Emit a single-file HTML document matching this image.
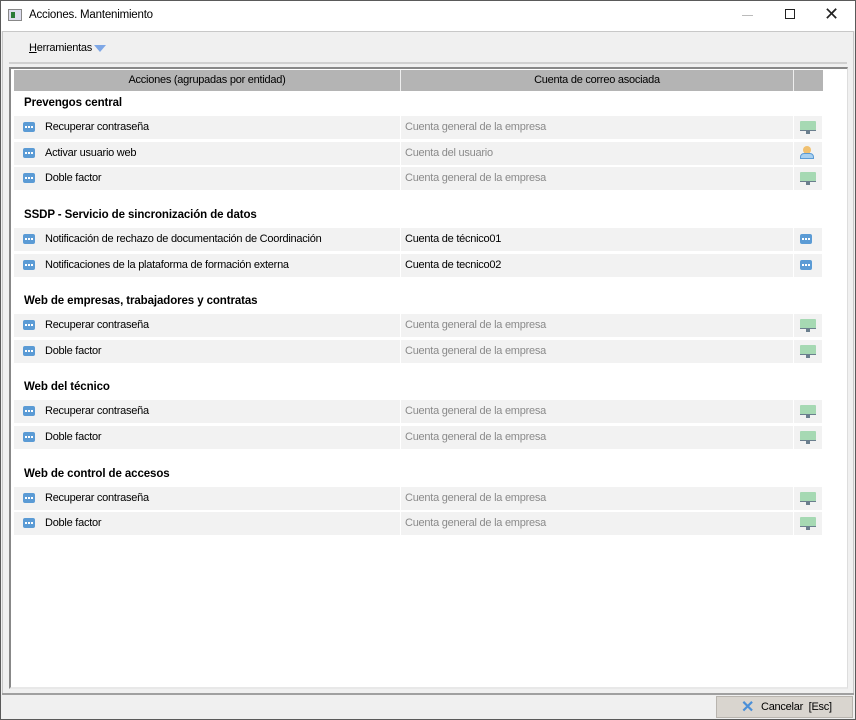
<!DOCTYPE html><html><head><style>
*{margin:0;padding:0;box-sizing:border-box}
body{width:856px;height:720px;position:relative;overflow:hidden;font-family:"Liberation Sans",sans-serif;font-size:12px;color:#000;background:#f0f0f0}
.a{position:absolute}
.t{font-size:11px;letter-spacing:-0.25px;white-space:nowrap}
.row{position:absolute;left:14px;height:23px}
.c1{position:absolute;left:0;width:386px;height:23px;background:#f2f2f2}
.c2{position:absolute;left:387px;width:392px;height:23px;background:#f2f2f2}
.c3{position:absolute;left:780px;width:28px;height:23px;background:#f2f2f2}
.ic{position:absolute;width:12px;height:10px;background:#5b9bd5;border-radius:2px;top:6px}
.ic i{position:absolute;top:4px;width:2px;height:2px;background:#fff}
.l1{position:absolute;left:31px;top:5px}
.l2{position:absolute;left:391px;top:5px;color:#8a8a8a}
.l2.b{color:#000}
.mon{position:absolute;left:786px;top:5px;width:16px;height:10px;background:#a6d9b3;border-radius:1px}
.mon:after{content:"";position:absolute;left:6px;top:10px;width:4px;height:3px;background:#6b7f8e}
.mon:before{content:"";position:absolute;left:0;top:9px;width:16px;height:1px;background:#6b7f8e}
.h{position:absolute;left:24px;font-weight:bold;font-size:11.5px;letter-spacing:-0.1px}
</style></head><body>
<div class="a" style="left:0;top:0;width:856px;height:720px;border:1px solid #5a5a5a"></div>
<div class="a" style="left:1px;top:1px;width:854px;height:30px;background:#fff"></div>
<div class="a" style="left:8px;top:9px;width:14px;height:12px;border:1px solid #888;background:#dde"><div style="position:absolute;left:2px;top:2px;width:4px;height:6px;background:#2a7a3a"></div></div>
<div class="a" style="left:29px;top:9px;font-size:11.5px;letter-spacing:-0.2px">Acciones. Mantenimiento</div>
<div class="a" style="left:742px;top:15px;width:11px;height:1px;background:#bbb"></div>
<div class="a" style="left:785px;top:9px;width:10px;height:10px;border:1px solid #222"></div>
<div class="a" style="left:824px;top:4px;font-size:18px;color:#222">✕</div>
<div class="a" style="left:2px;top:31px;width:852px;height:663px;border:1px solid #c8c8c8"></div>
<div class="a t" style="left:29px;top:42px"><u>H</u>erramientas</div>
<div class="a" style="left:94px;top:45px;width:0;height:0;border-left:6px solid transparent;border-right:6px solid transparent;border-top:7px solid #7ea7e6"></div>
<div class="a" style="left:9px;top:62px;width:838px;height:2px;background:#d0d0d0"></div>
<div class="a" style="left:9px;top:67px;width:839px;height:622px;background:#fff;border-left:2px solid #888;border-top:2px solid #888;border-right:1px solid #ddd;border-bottom:2px solid #e8e8e8"></div>
<div class="a" style="left:14px;top:70px;width:809px;height:21px;background:#b4b4b4"></div>
<div class="a" style="left:400px;top:70px;width:1px;height:21px;background:#eee"></div>
<div class="a" style="left:793px;top:70px;width:1px;height:21px;background:#eee"></div>
<div class="a t" style="left:14px;top:74px;width:386px;text-align:center">Acciones (agrupadas por entidad)</div>
<div class="a t" style="left:401px;top:74px;width:392px;text-align:center">Cuenta de correo asociada</div>

<div class="h" style="top:97px">Prevengos central</div>
<div class="row" style="top:116px"><div class="c1"></div><div class="c2"></div><div class="c3"></div><div class="ic" style="left:9px"><i style="left:2px"></i><i style="left:5px"></i><i style="left:8px"></i></div><div class="l1 t">Recuperar contraseña</div><div class="l2 t">Cuenta general de la empresa</div><div class="mon"></div></div>
<div class="row" style="top:142px"><div class="c1"></div><div class="c2"></div><div class="c3"></div><div class="ic" style="left:9px"><i style="left:2px"></i><i style="left:5px"></i><i style="left:8px"></i></div><div class="l1 t">Activar usuario web</div><div class="l2 t">Cuenta del usuario</div><div class="a" style="left:789px;top:4px;width:8px;height:8px;border-radius:50%;background:#f0c070"></div><div class="a" style="left:786px;top:11px;width:14px;height:6px;border-radius:4px 4px 0 0;background:#a8d0f0;border:1px solid #5b9bd5"></div></div>
<div class="row" style="top:167px"><div class="c1"></div><div class="c2"></div><div class="c3"></div><div class="ic" style="left:9px"><i style="left:2px"></i><i style="left:5px"></i><i style="left:8px"></i></div><div class="l1 t">Doble factor</div><div class="l2 t">Cuenta general de la empresa</div><div class="mon"></div></div>

<div class="h" style="top:209px">SSDP - Servicio de sincronización de datos</div>
<div class="row" style="top:228px"><div class="c1"></div><div class="c2"></div><div class="c3"></div><div class="ic" style="left:9px"><i style="left:2px"></i><i style="left:5px"></i><i style="left:8px"></i></div><div class="l1 t">Notificación de rechazo de documentación de Coordinación</div><div class="l2 b t">Cuenta de técnico01</div><div class="ic" style="left:786px"><i style="left:2px"></i><i style="left:5px"></i><i style="left:8px"></i></div></div>
<div class="row" style="top:254px"><div class="c1"></div><div class="c2"></div><div class="c3"></div><div class="ic" style="left:9px"><i style="left:2px"></i><i style="left:5px"></i><i style="left:8px"></i></div><div class="l1 t">Notificaciones de la plataforma de formación externa</div><div class="l2 b t">Cuenta de tecnico02</div><div class="ic" style="left:786px"><i style="left:2px"></i><i style="left:5px"></i><i style="left:8px"></i></div></div>

<div class="h" style="top:295px">Web de empresas, trabajadores y contratas</div>
<div class="row" style="top:314px"><div class="c1"></div><div class="c2"></div><div class="c3"></div><div class="ic" style="left:9px"><i style="left:2px"></i><i style="left:5px"></i><i style="left:8px"></i></div><div class="l1 t">Recuperar contraseña</div><div class="l2 t">Cuenta general de la empresa</div><div class="mon"></div></div>
<div class="row" style="top:340px"><div class="c1"></div><div class="c2"></div><div class="c3"></div><div class="ic" style="left:9px"><i style="left:2px"></i><i style="left:5px"></i><i style="left:8px"></i></div><div class="l1 t">Doble factor</div><div class="l2 t">Cuenta general de la empresa</div><div class="mon"></div></div>

<div class="h" style="top:381px">Web del técnico</div>
<div class="row" style="top:400px"><div class="c1"></div><div class="c2"></div><div class="c3"></div><div class="ic" style="left:9px"><i style="left:2px"></i><i style="left:5px"></i><i style="left:8px"></i></div><div class="l1 t">Recuperar contraseña</div><div class="l2 t">Cuenta general de la empresa</div><div class="mon"></div></div>
<div class="row" style="top:426px"><div class="c1"></div><div class="c2"></div><div class="c3"></div><div class="ic" style="left:9px"><i style="left:2px"></i><i style="left:5px"></i><i style="left:8px"></i></div><div class="l1 t">Doble factor</div><div class="l2 t">Cuenta general de la empresa</div><div class="mon"></div></div>

<div class="h" style="top:468px">Web de control de accesos</div>
<div class="row" style="top:487px"><div class="c1"></div><div class="c2"></div><div class="c3"></div><div class="ic" style="left:9px"><i style="left:2px"></i><i style="left:5px"></i><i style="left:8px"></i></div><div class="l1 t">Recuperar contraseña</div><div class="l2 t">Cuenta general de la empresa</div><div class="mon"></div></div>
<div class="row" style="top:512px"><div class="c1"></div><div class="c2"></div><div class="c3"></div><div class="ic" style="left:9px"><i style="left:2px"></i><i style="left:5px"></i><i style="left:8px"></i></div><div class="l1 t">Doble factor</div><div class="l2 t">Cuenta general de la empresa</div><div class="mon"></div></div>

<div class="a" style="left:2px;top:693px;width:852px;height:2px;background:#a0a0a0"></div>
<div class="a" style="left:716px;top:696px;width:137px;height:22px;background:#d9d5cf;border:1px solid #b8b4ae"></div>
<div class="a" style="left:741px;top:697px;font-size:16px;color:#4a8fd8;font-weight:bold">✕</div>
<div class="a t" style="left:761px;top:701px">Cancelar&nbsp; [Esc]</div>
</body></html>
